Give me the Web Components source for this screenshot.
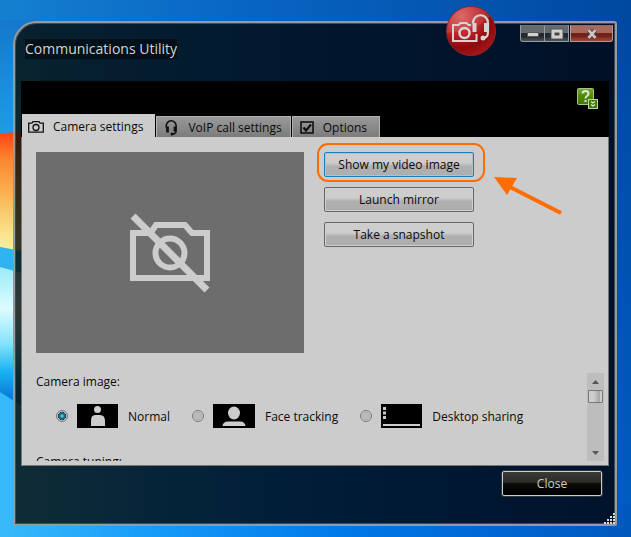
<!DOCTYPE html>
<html lang="en">
<head>
<meta charset="utf-8">
<title>Communications Utility</title>
<style>
html, body { margin: 0; }
body { font: 12px/18px "Open Sans", "Noto Sans", sans-serif; color: #0a0a0a; }
</style>
</head>
<body>
<desk-top>
  <utility-window heading="Communications Utility">
    <tab-strip slot="tabs"></tab-strip>
    <camera-panel></camera-panel>
    <dialog-button slot="footer">Close</dialog-button>
  </utility-window>
</desk-top>

<script>
function define(name, html) {
  const t = document.createElement('template');
  t.innerHTML = '<style>*{box-sizing:border-box}button{font:inherit;color:inherit;margin:0}svg{display:block}</style>' + html;
  customElements.define(name, class extends HTMLElement {
    constructor() {
      super();
      this.attachShadow({ mode: 'open' }).append(t.content.cloneNode(true));
    }
    connectedCallback() {
      this.shadowRoot.querySelectorAll('[data-attr]').forEach(n => {
        n.textContent = this.getAttribute(n.dataset.attr);
      });
    }
  });
}

define('desk-top', `
<style>
:host { display: flex; position: relative; min-height: 100vh; box-sizing: border-box; padding: 21px 14px 11px 13px; overflow: hidden; }
.wall { position: absolute; inset: 0; width: 100%; height: 100%; }
::slotted(*) { flex: 1; }
</style>
<svg class="wall" viewBox="0 0 631 537" preserveAspectRatio="none" aria-hidden="true">
  <defs>
    <linearGradient id="top" x1="0" y1="0" x2="1" y2="0"><stop offset="0" stop-color="#1580d0"/><stop offset=".35" stop-color="#0967c5"/><stop offset="1" stop-color="#0048a0"/></linearGradient>
    <linearGradient id="side" x1="0" y1="0" x2="0" y2="1"><stop offset="0" stop-color="#1478cc"/><stop offset="1" stop-color="#1f9fe4"/></linearGradient>
    <linearGradient id="flame" x1="0" y1="0" x2="0" y2="1"><stop offset="0" stop-color="#ff3f12"/><stop offset=".22" stop-color="#fb8530"/><stop offset=".5" stop-color="#fab452"/><stop offset=".8" stop-color="#f8e28c"/><stop offset="1" stop-color="#fbf3ae"/></linearGradient>
    <linearGradient id="glow" x1="0" y1="0" x2="0" y2="1"><stop offset="0" stop-color="#9beaf8"/><stop offset=".3" stop-color="#dcfdff"/><stop offset=".55" stop-color="#86e2fb"/><stop offset=".75" stop-color="#18b4f0"/><stop offset="1" stop-color="#0868cc"/></linearGradient>
    <linearGradient id="low" x1="0" y1="0" x2="1" y2="0"><stop offset="0" stop-color="#38bafa"/><stop offset=".25" stop-color="#159af8"/><stop offset=".55" stop-color="#0078e8"/><stop offset=".8" stop-color="#0065d2"/><stop offset="1" stop-color="#0058bc"/></linearGradient>
    <linearGradient id="right" x1="0" y1="0" x2="0" y2="1"><stop offset="0" stop-color="#0049a2"/><stop offset="1" stop-color="#005cc0"/></linearGradient>
  </defs>
  <rect width="631" height="300" fill="url(#top)"/>
  <rect y="20" width="40" height="120" fill="url(#side)"/>
  <rect y="370" width="631" height="167" fill="url(#low)"/>
  <rect x="606" y="24" width="25" height="480" fill="url(#right)"/>
  <path d="M0 134 L22 131 V258 L0 247z" fill="url(#flame)"/>
  <path d="M0 247 L22 251 V274 L0 267z" fill="#2fb4f0"/>
  <path d="M0 267 L22 273 V406 L0 392z" fill="url(#glow)"/>
</svg>
<slot></slot>`);

define('window-controls', `
<style>
:host { display: flex; }
button { display: grid; place-items: center; width: 25px; height: 17px; padding: 0; border: 1px solid #969ba2; border-top: 1px solid #6b727b; margin-left: -1px; background: linear-gradient(#666b72 0 45%, #24292f 50% 70%, #4d545c); }
.min { border-bottom-left-radius: 3px; }
.x { width: 43px; margin-left: 1px; border-bottom-right-radius: 3px; border-color: #8d6a68 #b09a98 #b09a98; background: linear-gradient(#a8695f 0 45%, #722016 50% 65%, #9d4a38); }
</style>
<button class="min" aria-label="Minimize"><svg width="12" height="6"><rect x=".5" y="1.500" width="11" height="4" fill="#d0d0d0" stroke="#555"/></svg></button>
<button aria-label="Maximize"><svg width="14" height="12"><rect x="3" y="3" width="8" height="6" fill="none" stroke="#555" stroke-width="5"/><rect x="3" y="3" width="8" height="6" fill="none" stroke="#d0d0d0" stroke-width="3"/></svg></button>
<button class="x" aria-label="Close window"><svg width="12" height="12" fill="none"><path d="M2.500 2L9.500 10M9.500 2L2.500 10" stroke="#5b4846" stroke-width="4.500"/><path d="M2.500 2L9.500 10M9.500 2L2.500 10" stroke="#cfcaca" stroke-width="2.500"/></svg></button>`);

define('app-badge', `
<style>:host { display: block; width: 50px; height: 50px; }</style>
<svg viewBox="0 0 50 50" aria-hidden="true">
  <defs>
    <radialGradient id="r" cx=".3" cy=".2" r=".85"><stop offset="0" stop-color="#d75a58"/><stop offset=".45" stop-color="#c02226"/><stop offset=".75" stop-color="#8c0a0c"/><stop offset="1" stop-color="#a81418"/></radialGradient>
  </defs>
  <circle cx="25" cy="25" r="24.500" fill="url(#r)" stroke="#8b2530"/>
  <path d="M1 25A24 24 0 0 1 44 10Q34 24 1 27z" fill="#fff" opacity=".1"/>
  <g fill="none" stroke="#d4d4d4" stroke-width="2">
    <path d="M25 19h-2.500l-2-2h-6l-2 2H7v16h23.500V28"/>
    <circle cx="18.500" cy="27" r="5" stroke-width="2.500"/>
    <path d="M27 17.500C27 6.500 42 6.500 42 17.500V25Q42 32 37.500 32" stroke-width="2.200"/>
    <path d="M28.500 17v9M40 17v9" stroke-width="4"/>
  </g>
  <circle cx="37" cy="32" r="2.500" fill="#d4d4d4"/>
</svg>`);

define('help-button', `
<style>:host { display: block; } button { display: block; padding: 0; border: 0; background: none; }</style>
<button aria-label="Help"><svg width="22" height="22" viewBox="0 0 22 22">
  <defs><linearGradient id="g" x1="0" y1="0" x2="0" y2="1"><stop offset="0" stop-color="#77a832"/><stop offset=".5" stop-color="#4c8a00"/><stop offset="1" stop-color="#3e7a00"/></linearGradient></defs>
  <rect x=".5" y=".5" width="16" height="16" rx="1" fill="url(#g)" stroke="#a9c384"/>
  <path d="M5.500 5.500Q5.500 3 8.500 3T11.500 5.800Q11.500 7 10 8T8.500 10.500" fill="none" stroke="#e0e6d8" stroke-width="2"/><rect x="7.500" y="12" width="2" height="2" fill="#e0e6d8"/>
  <rect x="11.500" y="11.500" width="9" height="9" fill="#3f7d00" stroke="#c2d0b0"/>
  <path d="M14 13.500l2 1.500 2-1.500M14 16.500l2 1.500 2-1.500" fill="none" stroke="#dde5d2" stroke-width="1.300"/>
</svg></button>`);

define('tab-strip', `
<style>
:host { display: flex; align-items: flex-end; }
[role=tablist] { display: flex; align-items: flex-end; gap: 1px; }
button { display: flex; align-items: center; height: 21px; border: 1px solid #b4b4b4; border-width: 1px 1px 0 1px; background: linear-gradient(#999, #7c7c7c); padding: 2px 8px 0 7px; gap: 9px; border-radius: 1px 1px 0 0; white-space: nowrap; }
button[aria-selected=true] { height: 23px; background: #ccc; border-color: #ccc; padding: 2px 11px 0 5px; }
button:last-child { padding-right: 12px; }
</style>
<div role="tablist">
  <button role="tab" aria-selected="true"><svg width="16" height="12" fill="none" stroke="#111" stroke-width="1.300" aria-hidden="true"><path d="M.7 2.200H4L5 .7h6l1 1.500h3.300v9H.7z"/><circle cx="8" cy="6.500" r="3"/></svg>Camera settings</button>
  <button role="tab" aria-selected="false"><svg width="15" height="16" fill="none" stroke="#111" aria-hidden="true"><path d="M2.500 8C.5-1.500 13.500-1.500 12 7.500V11Q12 14 8.500 14" stroke-width="1.600"/><path d="M3.500 6.500v6M11 6.500v5" stroke-width="2.800"/><circle cx="8" cy="14" r="1.500" fill="#111" stroke="none"/></svg>VoIP call settings</button>
  <button role="tab" aria-selected="false"><svg width="14" height="14" fill="none" stroke="#111" aria-hidden="true"><rect x="1" y="1" width="12" height="11" stroke-width="1.600"/><path d="M3.500 6.500l2.500 3 5-6" stroke-width="2.200"/></svg>Options</button>
</div>`);

define('utility-window', `
<style>
:host { display: flex; flex-direction: column; position: relative; border: 2px solid #969a9e; border-radius: 24px 3px 2px 2px; background: linear-gradient(90deg, rgba(6,12,8,.81), rgba(0,7,14,.81) 40%, rgba(0,5,14,.83)); box-shadow: inset 0 0 0 1px #3c4c58; padding: 1px 6px 1px 6px; }
header { display: flex; justify-content: space-between; align-items: flex-start; min-height: 57px; }
h1 { margin: 15px 0 0 4px; font: 14px/20px "Open Sans", "Noto Sans", sans-serif; color: #d4d4d4; background: rgba(0,8,14,.6); white-space: nowrap; }
window-controls { margin: 1px -4px 0 0; }
app-badge { position: absolute; right: 119px; top: -17px; }
main { flex: 1; display: flex; flex-direction: column; background: #000; }
.bar { display: flex; justify-content: space-between; align-items: stretch; height: 56px; padding: 0 10px 0 1px; }
help-button { margin-top: 7px; }
.body { flex: 1; display: flex; background: #ccc; border: 1px solid #777; border-top: 0; }
::slotted(camera-panel) { flex: 1; }
footer { display: flex; justify-content: flex-end; height: 57px; padding: 5px 7px 0; color: #ccc; }
.grip { position: absolute; right: 0; bottom: 0; }
</style>
<header><h1 data-attr="heading"></h1><window-controls></window-controls></header>
<app-badge></app-badge>
<main>
  <div class="bar"><slot name="tabs"></slot><help-button></help-button></div>
  <div class="body"><slot></slot></div>
</main>
<footer><slot name="footer"></slot></footer>
<svg class="grip" width="11" height="11" fill="#d5dce0" aria-hidden="true"><path d="M9 0h2v2h-2zM9 3h2v2h-2zM6 3h2v2h-2zM9 6h2v2h-2zM6 6h2v2h-2zM3 6h2v2h-2zM9 9h2v2h-2zM6 9h2v2h-2zM3 9h2v2h-2zM0 9h2v2h-2z"/></svg>`);

define('dialog-button', `
<style>
:host { display: block; width: 100px; height: 25px; }
button { width: 100%; height: 100%; padding: 0; border: 1px solid #ccc; border-radius: 2px; background: linear-gradient(#3a3b35, #2b2c26 45%, #0b0b0b 50%, #000); box-shadow: 0 0 0 1px #30343a; }
</style>
<button><slot></slot></button>`);

define('action-button', `
<style>
:host { display: block; height: 25px; }
button { width: 100%; height: 100%; padding: 0; border: 1px solid #666; border-radius: 2px; background: linear-gradient(#cdcdcd 0 42%, #b0b0b0 58%, #adadad); box-shadow: inset 0 0 0 1px #d0d0d0; }
:host([focused]) button { border-color: #1482b4; box-shadow: inset 0 0 0 1px #a9c5d2; }
</style>
<button><slot></slot></button>`);

define('video-preview', `
<style>:host { display: grid; place-items: center; background: #6d6d6d; }</style>
<svg width="80" height="80" viewBox="0 0 80 80" fill="none" stroke="#ccc" stroke-width="6" role="img" aria-label="Camera off">
  <path d="M3 21H20.500L26 13H55L62 21H77V66H3z" transform="translate(0 -1)"/>
  <circle cx="40" cy="40" r="14.500"/><path d="M3 3L77 77" stroke-width="7"/>
</svg>`);

define('click-callout', `
<style>
:host { display: block; position: relative; }
.ring { position: absolute; inset: -9px -11px -5px -7px; border: 2px solid #ff6d00; border-radius: 11px; pointer-events: none; }
svg { position: absolute; left: calc(100% + 20px); top: 25px; pointer-events: none; }
</style>
<slot></slot><div class="ring"></div>
<svg width="70" height="40" aria-hidden="true"><path d="M14 9L67 36" stroke="#ff6d00" stroke-width="4"/><path d="M0 0L23 1L13 18z" fill="#ff6d00"/></svg>`);

define('side-scroller', `
<style>
:host { display: flex; flex-direction: column; width: 17px; background: #bdbdbd; }
button { display: grid; place-items: center; width: 17px; height: 17px; padding: 0; border: 0; background: none; }
.track { flex: 1; }
.thumb { width: 15px; height: 13px; margin: 0 1px; border: 1px solid #777; border-radius: 1px; background: linear-gradient(90deg, #cdcdcd 0 35%, #a4a4a4 85%, #ccc 86%); }
</style>
<button aria-label="Scroll up"><svg width="7" height="4"><path d="M0 4L3.500 0L7 4z" fill="#555"/></svg></button>
<div class="track"><div class="thumb"></div></div>
<button aria-label="Scroll down"><svg width="7" height="4"><path d="M0 0H7L3.500 4z" fill="#555"/></svg></button>`);

define('camera-modes', `
<style>
:host { display: block; }
fieldset { display: flex; gap: 22px; min-width: 0; margin: 0; padding: 0 0 0 20px; border: 0; }
legend { padding: 0; margin: 0 0 13px -20px; }
label { display: flex; align-items: center; white-space: nowrap; }
label svg { margin: 0 10px 0 9px; }
label span { padding-top: 2px; }
input { appearance: none; width: 12px; height: 12px; margin: 0; border: 1px solid #777; border-radius: 50%; background: radial-gradient(circle, #bbb 0 3px, #aaa 3px 4px, #d0d0d0 4px); }
input:checked { background: radial-gradient(circle at 50% 50%, #5fc3d8 0 1px, #16708e 2px 3px, #0b3850 4px, #c8c8c8 4px); }
</style>
<fieldset>
  <legend>Camera image:</legend>
  <label><input type="radio" name="mode" checked><svg width="41" height="24" aria-hidden="true"><rect width="41" height="24" fill="#000"/><circle cx="20.500" cy="5.500" r="3.500" fill="#ccc"/><path d="M14 22V17Q14 11 18 11H23Q28 11 28 17V22z" fill="#ccc"/></svg><span>Normal</span></label>
  <label><input type="radio" name="mode"><svg width="42" height="24" aria-hidden="true"><rect width="42" height="24" fill="#000"/><ellipse cx="21" cy="9" rx="6" ry="6.500" fill="#ccc"/><path d="M9.500 22Q10 17.500 15 17.500H27Q32 17.500 32.500 22z" fill="#ccc"/></svg><span>Face tracking</span></label>
  <label><input type="radio" name="mode"><svg width="41" height="24" aria-hidden="true"><rect width="41" height="24" fill="#000"/><path d="M2 3h3v3H2zM2 7.500h3v3H2zM2 12h3v3H2zM2 20h37v2H2z" fill="#ccc"/></svg><span>Desktop sharing</span></label>
</fieldset>`);

define('camera-panel', `
<style>
:host { display: flex; flex-direction: column; padding: 15px 4px 4px 14px; gap: 20px; }
.top { display: flex; gap: 20px; }
video-preview { width: 268px; aspect-ratio: 4 / 3; }
.actions { display: flex; flex-direction: column; gap: 10px; width: 150px; }
.settings { flex: 1 1 0; min-height: 88px; display: flex; justify-content: space-between; overflow: hidden; }
.list { flex: 1; height: 0; display: flex; flex-direction: column; gap: 25px; }
p { margin: 0; }
</style>
<div class="top">
  <video-preview></video-preview>
  <div class="actions">
    <click-callout><action-button focused>Show my video image</action-button></click-callout>
    <action-button>Launch mirror</action-button>
    <action-button>Take a snapshot</action-button>
  </div>
</div>
<div class="settings">
  <div class="list"><camera-modes></camera-modes><p>Camera tuning:</p></div>
  <side-scroller></side-scroller>
</div>`);
</script>
</body>
</html>
